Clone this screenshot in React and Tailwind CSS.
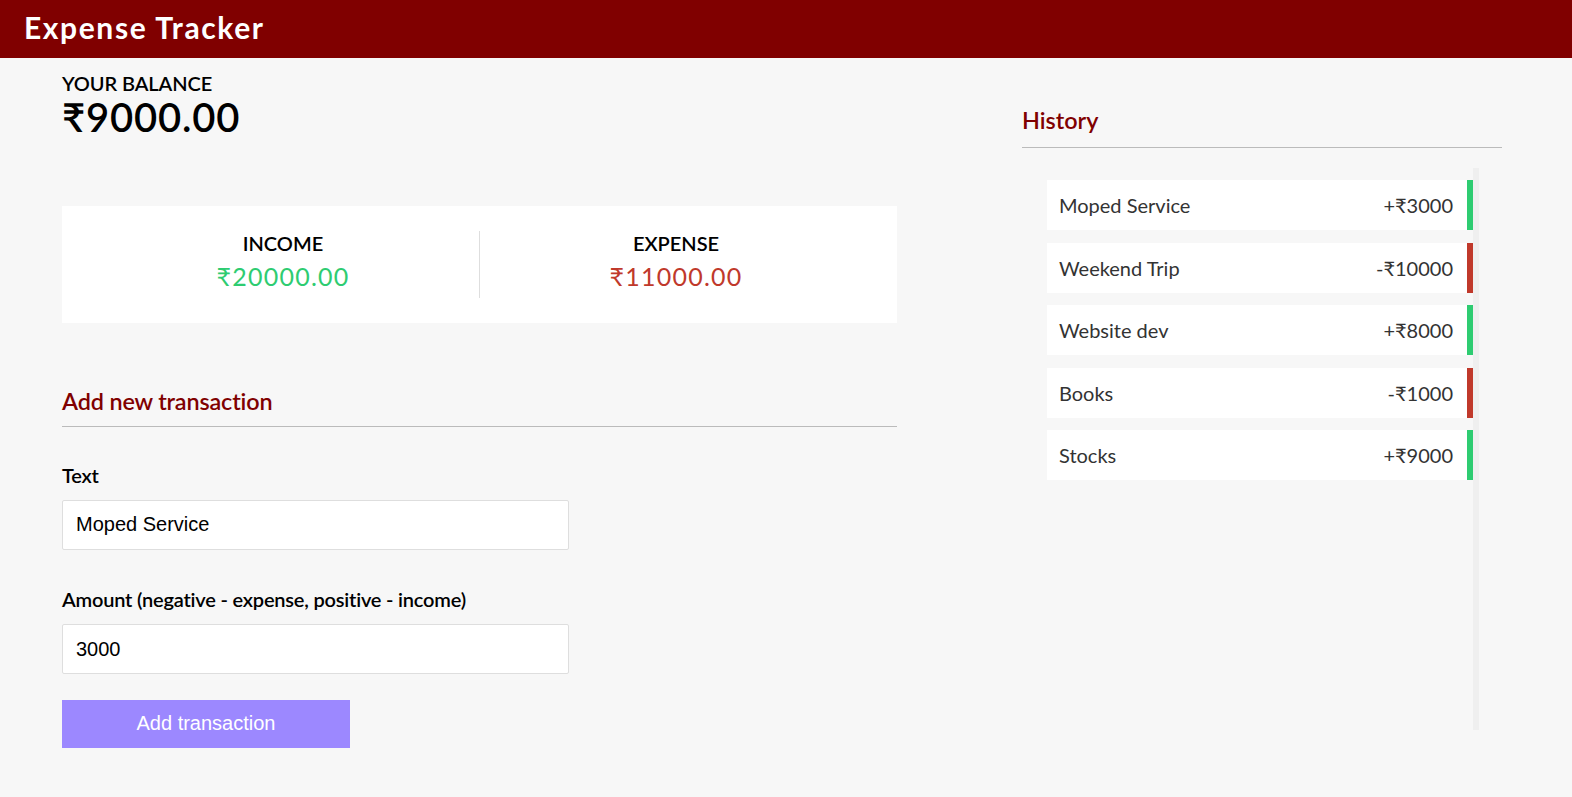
import { useState } from 'react'

const transactions = [
  { id: 1, text: 'Moped Service', amount: 3000 },
  { id: 2, text: 'Weekend Trip', amount: -10000 },
  { id: 3, text: 'Website dev', amount: 8000 },
  { id: 4, text: 'Books', amount: -1000 },
  { id: 5, text: 'Stocks', amount: 9000 },
]

const Header = () => (
  <header className="h-[58px] bg-[#800000] px-[24px] pt-[9px]">
    <h2 className="text-[30px] leading-[36px] font-bold tracking-[1.6px] text-white">Expense Tracker</h2>
  </header>
)

const Balance = () => (
  <div className="pt-[13px]">
    <h4 className="text-[20px] leading-[24px] font-semibold tracking-[-0.1px] uppercase text-black">Your Balance</h4>
    <h1 className="text-[40px] leading-[44px] font-semibold tracking-[0.8px] text-black">₹9000.00</h1>
  </div>
)

const IncomeExpenses = () => (
  <div className="mt-[67px] flex bg-white p-[25px]">
    <div className="flex-1 border-r border-[#dedede] text-center">
      <h4 className="text-[20px] leading-[24px] font-semibold uppercase text-black">Income</h4>
      <p className="my-[6.25px] text-[25px] leading-[30px] tracking-[1.25px] text-[#2ecc71]">₹20000.00</p>
    </div>
    <div className="flex-1 text-center">
      <h4 className="text-[20px] leading-[24px] font-semibold uppercase text-black">Expense</h4>
      <p className="my-[6.25px] text-[25px] leading-[30px] tracking-[1.25px] text-[#c0392b]">₹11000.00</p>
    </div>
  </div>
)

const AddTransaction = () => {
  const [text, setText] = useState('Moped Service')
  const [amount, setAmount] = useState('3000')

  return (
    <div className="mt-[64px]">
      <h3 className="border-b border-[#bbb] pb-[11px] text-[23.4px] leading-[28px] font-semibold tracking-[-0.15px] text-[#800000]">
        Add new transaction
      </h3>
      <form onSubmit={(e) => e.preventDefault()}>
        <label className="mt-[36px] block text-[20px] leading-[24px] font-semibold tracking-[-0.2px] text-black">Text</label>
        <input
          type="text"
          value={text}
          onChange={(e) => setText(e.target.value)}
          className="mt-[13px] block h-[50px] w-[507px] rounded-[2px] border border-[#dedede] bg-white px-[13px] text-[20px] text-black outline-none"
          style={{ fontFamily: 'Arial, "Liberation Sans", sans-serif' }}
        />
        <label className="mt-[37px] block text-[20px] leading-[24px] font-semibold tracking-[-0.2px] text-black">
          Amount (negative - expense, positive - income)
        </label>
        <input
          type="text"
          value={amount}
          onChange={(e) => setAmount(e.target.value)}
          className="mt-[13px] block h-[50px] w-[507px] rounded-[2px] border border-[#dedede] bg-white px-[13px] pt-[1px] text-[20px] text-black outline-none"
          style={{ fontFamily: 'Arial, "Liberation Sans", sans-serif' }}
        />
        <button
          type="submit"
          className="mt-[26px] block h-[48px] w-[288px] bg-[#9c88ff] pb-[2px] text-[20px] text-white"
          style={{ fontFamily: 'Arial, "Liberation Sans", sans-serif' }}
        >
          Add transaction
        </button>
      </form>
    </div>
  )
}

const History = () => (
  <div className="pt-[48px]">
    <h3 className="border-b border-[#bbb] pb-[13px] text-[23.4px] leading-[28px] font-semibold text-[#800000]">
      History
    </h3>
    <div className="ml-[25px] mt-[20px] flex h-[562px] w-[432px]">
      <ul className="flex flex-1 flex-col gap-[12.5px] pt-[12px]">
        {transactions.map((t) => (
          <li
            key={t.id}
            className={`flex h-[50px] items-center justify-between border-r-[6px] bg-white pl-[12px] pr-[14px] text-[20px] text-[#333] ${
              t.amount < 0 ? 'border-[#c0392b]' : 'border-[#2ecc71]'
            }`}
          >
            <span>{t.text}</span>
            <span>
              {t.amount < 0 ? '-' : '+'}₹{Math.abs(t.amount)}
            </span>
          </li>
        ))}
      </ul>
      {/* scroll track */}
      <div className="w-[6px] bg-[#efefef]" />
    </div>
  </div>
)

export default function App() {
  return (
    <div className="min-h-screen bg-[#f7f7f7]" style={{ fontFamily: 'Lato, "Noto Sans", sans-serif' }}>
      <Header />
      <main className="flex pl-[62px]">
        <div className="w-[835px]">
          <Balance />
          <IncomeExpenses />
          <AddTransaction />
        </div>
        <div className="ml-[125px] w-[480px]">
          <History />
        </div>
      </main>
    </div>
  )
}
